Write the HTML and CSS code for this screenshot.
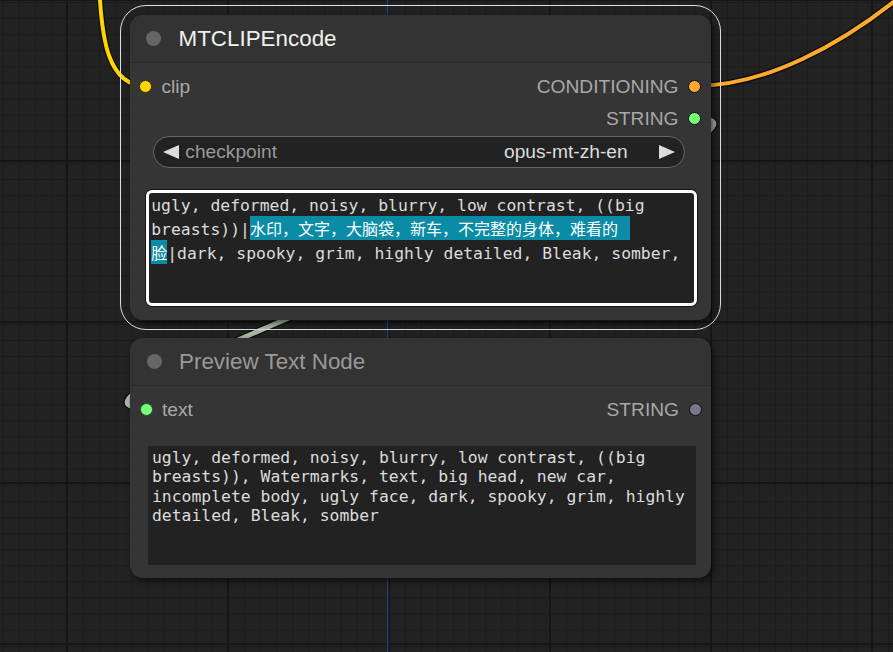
FILE: index.html
```html
<!DOCTYPE html>
<html lang="en">
<head>
<meta charset="utf-8">
<title>MTCLIPEncode</title>
<link rel="stylesheet" href="styles.css">
</head>
<body>
<div class="canvas">
  <svg class="links" width="893" height="652" viewBox="0 0 893 652">
    <g fill="none" stroke-linecap="round">
      <path class="link-edge" d="M 99 -20 C 101 40, 108 86, 146 86"/>
      <path class="link-yellow" d="M 99 -20 C 101 40, 108 86, 146 86"/>
      <path class="link-edge" d="M 695 86 C 760 86, 840 50, 920 -20"/>
      <path class="link-orange" d="M 695 86 C 760 86, 840 50, 920 -20"/>
      <path class="link-edge wide" d="M 695 118 C 850 118, -9 408, 146 408"/>
      <path class="link-string" d="M 695 118 C 850 118, -9 408, 146 408"/>
    </g>
  </svg>

  <div class="selection node-encode">
    <div class="node">
      <div class="title">
        <span class="title-dot"></span>
        <span class="title-text selected">MTCLIPEncode</span>
      </div>
      <div class="slots">
        <div class="slot-row">
          <div class="slot slot-in"><span class="dot dot-clip"></span><span class="label">clip</span></div>
          <div class="slot slot-out"><span class="label">CONDITIONING</span><span class="dot dot-cond"></span></div>
        </div>
        <div class="slot-row">
          <div class="slot slot-out"><span class="label">STRING</span><span class="dot dot-string"></span></div>
        </div>
      </div>
      <div class="combo">
        <svg class="arrow" width="16" height="14" viewBox="0 0 16 14"><polygon points="16,0 16,14 0,7"/></svg>
        <span class="combo-label">checkpoint</span>
        <span class="combo-value">opus-mt-zh-en</span>
        <svg class="arrow arrow-right" width="16" height="14" viewBox="0 0 16 14"><polygon points="0,0 0,14 16,7"/></svg>
      </div>
      <div class="textbox textbox-edit">
        <div class="text-scroll">
          <div class="tline">ugly, deformed, noisy, blurry, low contrast, ((big</div>
          <div class="tline">breasts))|<span class="sel sel-trail">水印，文字，大脑袋，新车，不完整的身体，难看的</span></div>
          <div class="tline"><span class="sel">脸</span>|dark, spooky, grim, highly detailed, Bleak, somber,</div>
        </div>
      </div>
    </div>
  </div>

  <div class="node node-preview">
    <div class="title">
      <span class="title-dot"></span>
      <span class="title-text">Preview Text Node</span>
    </div>
    <div class="slots">
      <div class="slot-row">
        <div class="slot slot-in"><span class="dot dot-text"></span><span class="label">text</span></div>
        <div class="slot slot-out"><span class="label">STRING</span><span class="dot dot-off"></span></div>
      </div>
    </div>
    <div class="textbox textbox-view">
      <div class="vline">ugly, deformed, noisy, blurry, low contrast, ((big</div>
      <div class="vline">breasts)), Watermarks, text, big head, new car,</div>
      <div class="vline">incomplete body, ugly face, dark, spooky, grim, highly</div>
      <div class="vline">detailed, Bleak, somber</div>
    </div>
  </div>
</div>
</body>
</html>
```
FILE: styles.css
```css
* { box-sizing: border-box; }

html, body {
  margin: 0;
  padding: 0;
  background: #222;
}

.canvas {
  position: relative;
  width: 893px;
  height: 652px;
  overflow: hidden;
  font-family: "Liberation Sans", Arial, sans-serif;
  background-color: #222222;
  background-image:
    linear-gradient(90deg, transparent 387px, #2d3b72 387px, #2d3b72 388px, #1b2140 388px, #1b2140 389px, transparent 389px),
    linear-gradient(90deg, #161616 0, #161616 2px, transparent 2px),
    linear-gradient(180deg, #161616 0, #161616 2px, transparent 2px),
    linear-gradient(90deg, #1b1b1b 0, #1b1b1b 1px, transparent 1px),
    linear-gradient(180deg, #1b1b1b 0, #1b1b1b 1px, transparent 1px);
  background-size:
    893px 652px,
    161px 100%,
    100% 161px,
    16.1px 100%,
    100% 16.1px;
  background-position:
    0 0,
    66px 0,
    0 -1px,
    67px 0,
    0 2px;
  background-repeat: no-repeat, repeat, repeat, repeat, repeat;
}

.links {
  position: absolute;
  left: 0;
  top: 0;
  z-index: 0;
}

.link-edge { stroke: #0c0c0c; stroke-width: 6.5; }
.link-edge.wide { stroke-width: 7.5; }
.link-yellow { stroke: #ffd500; stroke-width: 4; }
.link-orange { stroke: #ffa931; stroke-width: 4; }
.link-string { stroke: #a7b8a3; stroke-width: 5; }

/* selection outline around the encode node */
.selection {
  position: absolute;
  z-index: 1;
  left: 120px;
  top: 5px;
  width: 601px;
  height: 325px;
  padding: 8.5px;
  border: 1.5px solid #dedede;
  border-radius: 26px;
}

.node {
  display: flex;
  flex-direction: column;
  width: 581px;
  background: #353535;
  border-radius: 13px;
  box-shadow: 3px 3px 7px rgba(0, 0, 0, 0.55);
}

.node-encode .node { height: 305px; }

.node-preview {
  position: absolute;
  z-index: 1;
  left: 130px;
  top: 337.5px;
  height: 240.5px;
}

.title {
  display: flex;
  align-items: center;
  height: 48px;
  flex: none;
  border-bottom: 1px solid #2b2b2b;
  background: #333333;
  border-radius: 13px 13px 0 0;
}

.title-dot {
  width: 15px;
  height: 15px;
  margin-left: 16.5px;
  border-radius: 50%;
  background: #666;
}

.title-text {
  margin-left: 17.5px;
  padding-top: 2px;
  font-size: 22.4px;
  color: #999;
}

.title-text.selected { color: #f0f0f0; }

.slots {
  display: flex;
  flex-direction: column;
  padding-top: 8px;
}

.slot-row {
  display: flex;
  align-items: center;
  height: 32px;
}

.slot {
  display: flex;
  align-items: center;
  gap: 9.5px;
  font-size: 19.2px;
  color: #a8a8a8;
}

.slot-in { padding-left: 9.5px; }
.slot-out { margin-left: auto; padding-right: 9.5px; }

.label { padding-top: 1px; }

.dot {
  width: 13px;
  height: 13px;
  border-radius: 50%;
  border: 1.2px solid #111;
  flex: none;
}

.dot-clip { background: #ffd500; border-color: #3a3200; }
.dot-cond { background: #ffa931; }
.dot-string { background: #77ff77; }
.dot-text { background: #77ff77; border-color: #2a4a2a; }
.dot-off { background: #787888; }

/* combo widget */
.combo {
  display: flex;
  align-items: center;
  height: 32px;
  margin: 1px 25.3px 0 23.3px;
  padding: 0 9.5px;
  background: #222;
  border: 1px solid #666;
  border-radius: 16px;
  font-size: 19.2px;
}

.arrow { fill: #dddddd; flex: none; }

.combo-label {
  margin-left: 6px;
  padding-top: 1px;
  color: #999;
}

.combo-value {
  margin-left: auto;
  margin-right: 31px;
  padding-top: 1px;
  color: #dddddd;
}

/* text areas */
.textbox {
  overflow: hidden;
  background: #222;
  font-family: "DejaVu Sans Mono", "Noto Sans CJK SC", monospace;
  font-size: 16.4px;
  color: #dcdcdc;
}

.textbox-edit {
  height: 116px;
  margin: 22.7px 13.3px 0 16px;
  padding: 0 0 0 2.7px;
  border: 3px solid #ffffff;
  border-radius: 6px;
  box-shadow: 0 0 0 1px #151515;
}

.text-scroll { margin-top: 1.8px; }

.tline {
  line-height: 22px;
  white-space: pre;
}

.sel {
  font-family: "Noto Sans CJK SC", sans-serif;
  font-size: 16px;
  background: #0a8ca6;
  color: #ffffff;
}

.sel-trail { padding-right: 12px; }

.textbox-view {
  height: 119.3px;
  margin: 20.5px 15px 0 17.7px;
  padding: 2px 0 0 4.3px;
}

.vline {
  height: 19.3px;
  line-height: 19.3px;
  white-space: pre;
}
```
